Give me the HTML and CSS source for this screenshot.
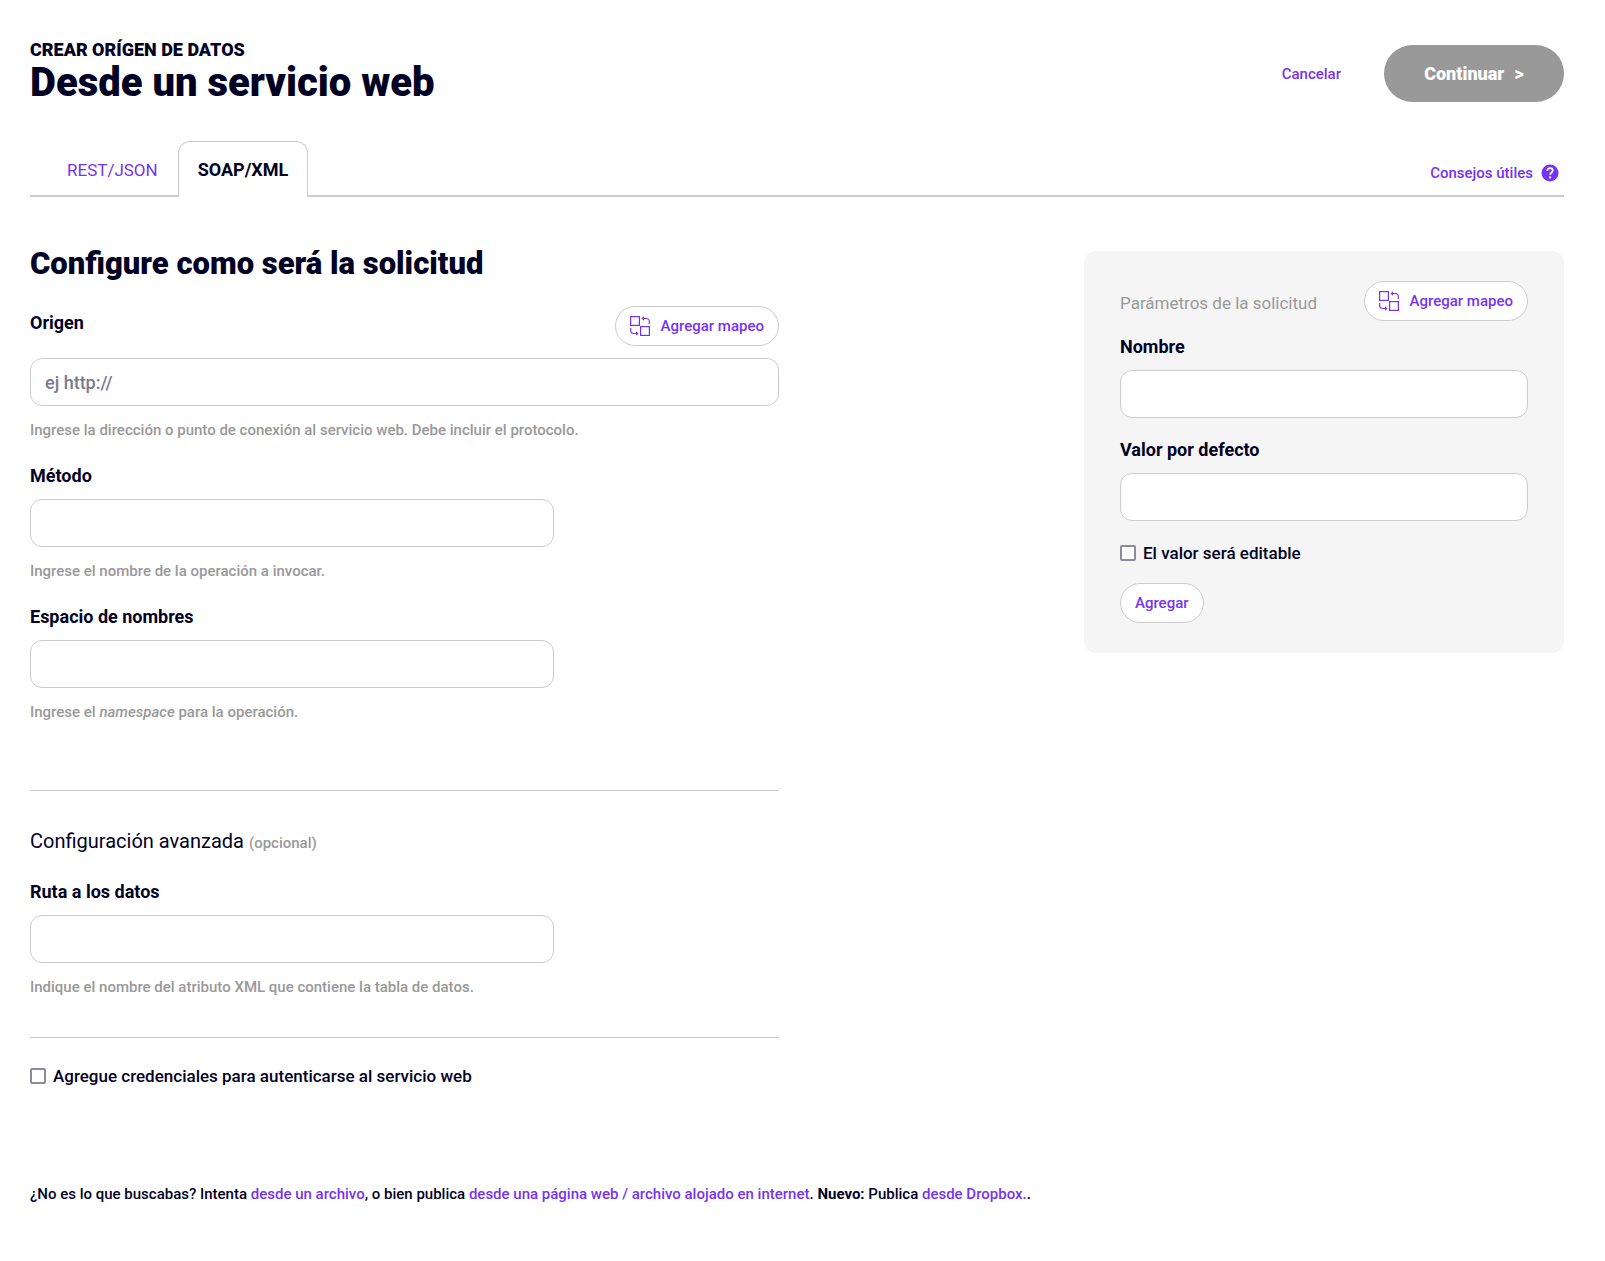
FILE: index.html
```html
<!DOCTYPE html>
<html lang="es">
<head>
    <meta charset="UTF-8">
    <meta name="viewport" content="width=device-width, initial-scale=1.0">
    <title>Desde un servicio web</title>
    <link rel="stylesheet" href="styles.css">
</head>
<body>
    <header class="page-header">
        <div class="page-title">
            <p>CREAR ORÍGEN DE DATOS</p>
            <h1>Desde un servicio web</h1>
        </div>
        <div class="header-actions">
            <a href="#" class="cancel">Cancelar</a>
            <button type="submit" form="ws-form" class="btn-continue">Continuar <span>&gt;</span></button>
        </div>
    </header>

    <nav class="tabs">
        <a href="#" class="tab">REST/JSON</a>
        <a href="#" class="tab active">SOAP/XML</a>
        <a href="#" class="tips">
            Consejos útiles
            <svg width="18" height="18" viewBox="0 0 18 18" aria-hidden="true">
                <circle cx="9" cy="9" r="8.5" fill="#7633f5"/>
                <path d="M6.3 6.9C6.3 5.2 7.4 4.1 9 4.1S11.8 5.1 11.8 6.6C11.8 8.4 9.1 8.7 9.1 10.8" fill="none" stroke="#fff" stroke-width="1.7"/>
                <circle cx="9.1" cy="13.4" r="1.1" fill="#fff"/>
            </svg>
        </a>
    </nav>

    <div class="content">
        <form class="main" id="ws-form">
            <h2>Configure como será la solicitud</h2>

            <div class="field">
                <div class="field-head">
                    <label for="origen">Origen</label>
                    <button type="button" class="btn">
                        <svg width="20" height="20" viewBox="0 0 20 20" aria-hidden="true">
                            <g fill="none" stroke="#7633f5" stroke-width="1.2">
                                <rect x="0.6" y="0.6" width="8.8" height="8.8"/>
                                <rect x="10.6" y="10.6" width="8.8" height="8.8"/>
                                <path d="M13 2.5H16Q19.3 2.5 19.3 5.5V8M0.7 12V14.5Q0.7 17.5 4 17.5H7"/>
                            </g>
                            <path d="M11.5 2.5L14 0.3V4.7ZM8.5 17.5L6 15.3V19.7Z" fill="#7633f5"/>
                        </svg>
                        Agregar mapeo
                    </button>
                </div>
                <input type="text" id="origen" placeholder="ej http://">
                <p class="hint">Ingrese la dirección o punto de conexión al servicio web. Debe incluir el protocolo.</p>
            </div>

            <div class="field short">
                <label for="metodo">Método</label>
                <input type="text" id="metodo">
                <p class="hint">Ingrese el nombre de la operación a invocar.</p>
            </div>

            <div class="field short">
                <label for="espacio">Espacio de nombres</label>
                <input type="text" id="espacio">
                <p class="hint">Ingrese el <em>namespace</em> para la operación.</p>
            </div>

            <section class="advanced">
                <h3>Configuración avanzada <small>(opcional)</small></h3>
                <div class="field short">
                    <label for="ruta">Ruta a los datos</label>
                    <input type="text" id="ruta">
                    <p class="hint">Indique el nombre del atributo XML que contiene la tabla de datos.</p>
                </div>
            </section>

            <div class="credentials">
                <label class="check">
                    <input type="checkbox">
                    Agregue credenciales para autenticarse al servicio web
                </label>
            </div>
        </form>

        <aside class="params">
            <div class="params-head">
                <h3>Parámetros de la solicitud</h3>
                <button type="button" class="btn">
                    <svg width="20" height="20" viewBox="0 0 20 20" aria-hidden="true">
                        <g fill="none" stroke="#7633f5" stroke-width="1.2">
                            <rect x="0.6" y="0.6" width="8.8" height="8.8"/>
                            <rect x="10.6" y="10.6" width="8.8" height="8.8"/>
                            <path d="M13 2.5H16Q19.3 2.5 19.3 5.5V8M0.7 12V14.5Q0.7 17.5 4 17.5H7"/>
                        </g>
                        <path d="M11.5 2.5L14 0.3V4.7ZM8.5 17.5L6 15.3V19.7Z" fill="#7633f5"/>
                    </svg>
                    Agregar mapeo
                </button>
            </div>
            <div class="field">
                <label for="nombre">Nombre</label>
                <input type="text" id="nombre">
            </div>
            <div class="field">
                <label for="valor">Valor por defecto</label>
                <input type="text" id="valor">
            </div>
            <label class="check">
                <input type="checkbox">
                El valor será editable
            </label>
            <button type="button" class="btn">Agregar</button>
        </aside>
    </div>

    <footer class="page-footer">
        ¿No es lo que buscabas? Intenta <a href="#">desde un archivo</a>, o bien publica <a href="#">desde una página web / archivo alojado en internet</a>. <strong>Nuevo:</strong> Publica <a href="#">desde Dropbox.</a>.
    </footer>
</body>
</html>
```

FILE: styles.css
```css
* {
    margin: 0;
    padding: 0;
    box-sizing: border-box;
}

body {
    font-family: Roboto, 'Liberation Sans', sans-serif;
    font-size: 18px;
    font-weight: 500;
    line-height: 24px;
    color: #000024;
    background-color: #fff;
    padding: 38px 41px 40px 30px;
}

a {
    color: #7633f5;
    text-decoration: none;
}

input,
button {
    font: inherit;
    color: inherit;
}

/* header */
.page-header {
    display: flex;
    justify-content: space-between;
    align-items: flex-start;
    margin-bottom: 38px;
}

.page-title p {
    font-weight: 900;
}

.page-title h1 {
    font-size: 40px;
    font-weight: 900;
    line-height: 41px;
}

.header-actions {
    display: flex;
    align-items: center;
    gap: 43px;
    padding-top: 7px;
}

.cancel {
    font-size: 15px;
}

.btn-continue {
    width: 180px;
    height: 57px;
    border: none;
    border-radius: 29px;
    background-color: #999;
    color: #fff;
    font-weight: 900;
    cursor: pointer;
}

.btn-continue span {
    margin-left: 6px;
}

/* tabs */
.tabs {
    display: flex;
    align-items: flex-end;
    height: 56px;
    padding-left: 17px;
    border-bottom: 2px solid #ccc;
    margin-bottom: 54px;
}

.tab {
    height: 56px;
    padding: 16px 19px;
    border: 1px solid transparent;
    border-bottom: none;
    border-radius: 12px 12px 0 0;
    margin-bottom: -2px;
    font-size: 17px;
    font-weight: 400;
}

.tab.active {
    border-color: #ccc;
    background-color: #fff;
    color: #000024;
    font-size: 18px;
    font-weight: 700;
}

.tips {
    display: flex;
    align-items: center;
    gap: 8px;
    margin-left: auto;
    padding: 0 5px 10px 0;
    font-size: 15px;
}

/* content */
.content {
    display: flex;
    justify-content: space-between;
    align-items: flex-start;
}

.main {
    width: 50%;
    padding-right: 18px;
}

.main h2 {
    font-size: 31px;
    font-weight: 900;
    line-height: 26px;
    margin-bottom: 29px;
}

.field {
    margin-bottom: 22px;
}

.field.short input {
    width: 70%;
}

.field label {
    display: block;
    font-weight: 700;
    margin-bottom: 11px;
}

.field-head {
    display: flex;
    justify-content: space-between;
    margin-bottom: 12px;
}

.field-head label {
    padding-top: 5px;
    margin: 0;
}

.field input {
    display: block;
    width: 100%;
    height: 48px;
    padding: 0 14px;
    border: 1px solid #ccc;
    border-radius: 12px;
    background-color: #fff;
}

.field input::placeholder {
    color: #7a7a8f;
    opacity: 1;
}

.hint {
    font-size: 15px;
    color: #999;
    margin-top: 12px;
}

.btn {
    display: inline-flex;
    align-items: center;
    gap: 11px;
    height: 40px;
    padding: 0 14px;
    border: 1px solid #ccc;
    border-radius: 20px;
    background-color: #fff;
    color: #7633f5;
    font-size: 15px;
    cursor: pointer;
}

.advanced {
    margin-top: 66px;
    padding: 38px 0 16px;
    border-top: 1px solid #ccc;
    border-bottom: 1px solid #ccc;
}

.advanced h3 {
    font-size: 20px;
    font-weight: 400;
    margin-bottom: 25px;
}

.advanced small {
    font-size: 15px;
    font-weight: 500;
    color: #999;
}

.check {
    display: flex;
    align-items: center;
    gap: 7px;
    font-size: 17px;
}

.check input {
    appearance: none;
    width: 16px;
    height: 16px;
    border: 2px solid #8c8a9e;
    border-radius: 2px;
    background-color: #fff;
}

.credentials {
    padding-top: 26px;
}

/* request parameters */
.params {
    width: 480px;
    padding: 30px 36px;
    border-radius: 12px;
    background-color: #f5f5f5;
}

.params-head {
    display: flex;
    justify-content: space-between;
    align-items: center;
    margin-bottom: 14px;
}

.params-head h3 {
    padding-top: 3px;
    font-size: 17px;
    font-weight: 400;
    color: #999;
}

.params .field {
    margin-bottom: 20px;
}

.params .check {
    margin-bottom: 18px;
}

/* footer */
.page-footer {
    margin-top: 94px;
    font-size: 15px;
}

.page-footer strong {
    font-weight: 700;
}
```
